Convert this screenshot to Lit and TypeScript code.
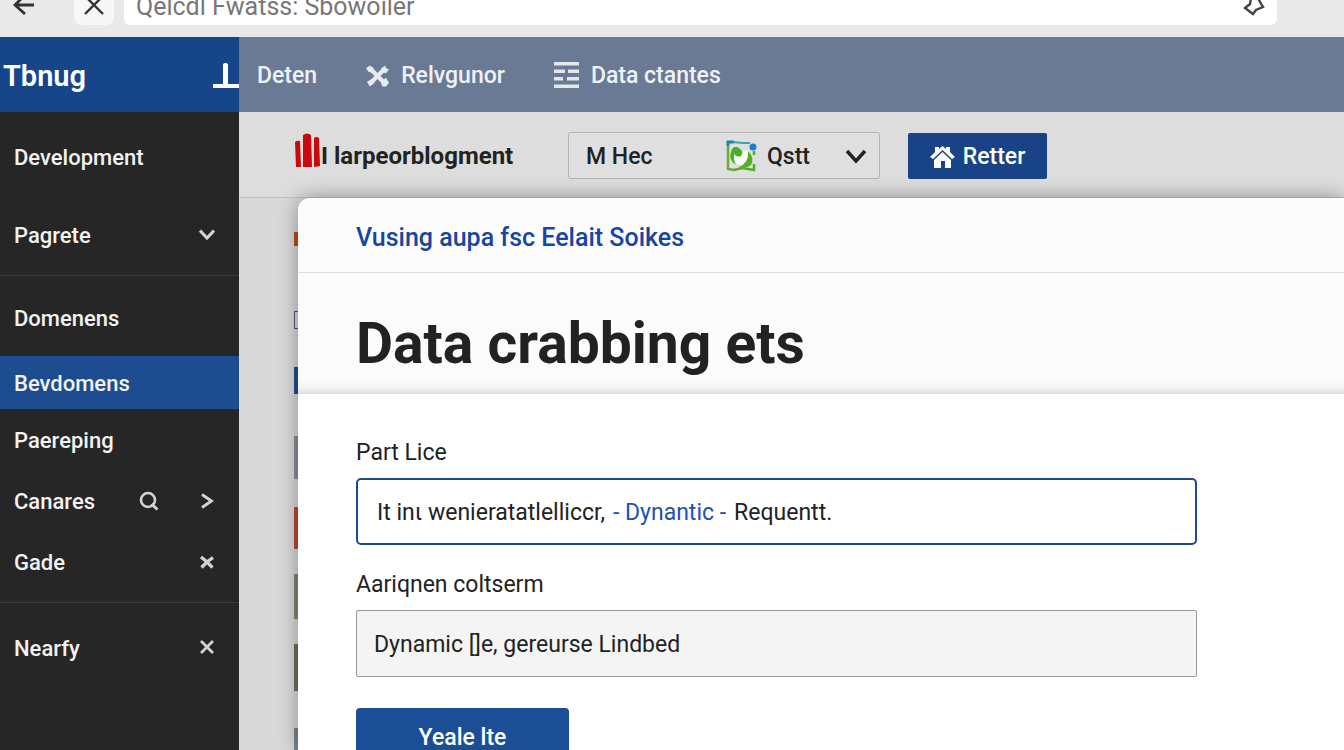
import { LitElement, html, css, svg, nothing } from "lit";
import { customElement } from "lit/decorators.js";
import { classMap } from "lit/directives/class-map.js";

interface NavItem {
  label: string;
  size: "tall" | "active" | "short";
  icon?: "down" | "right" | "close" | "closeBold";
  search?: boolean;
}

const GROUPS: { name: string; items: NavItem[] }[] = [
  {
    name: "first",
    items: [
      { label: "Development", size: "tall" },
      { label: "Pagrete", size: "tall", icon: "down" },
    ],
  },
  {
    name: "second",
    items: [
      { label: "Domenens", size: "tall" },
      { label: "Bevdomens", size: "active" },
      { label: "Paereping", size: "short" },
      { label: "Canares", size: "short", icon: "right", search: true },
      { label: "Gade", size: "short", icon: "closeBold" },
    ],
  },
  {
    name: "third",
    items: [{ label: "Nearfy", size: "tall", icon: "close" }],
  },
];

const GLYPHS = {
  down: svg`<path d="M1 4.500 8 12 15 4.500" fill="none" stroke="currentColor" stroke-width="3"/>`,
  right: svg`<path d="M3 1.500 12.500 8 3 14.500" fill="none" stroke="currentColor" stroke-width="2.800"/>`,
  close: svg`<path d="M2 2 14 14M14 2 2 14" fill="none" stroke="currentColor" stroke-width="2.700"/>`,
  closeBold: svg`<path d="M2 3 8 8 14 3.500M2.500 13.500 8 8 13.500 13.500" fill="none" stroke="currentColor" stroke-width="3.300"/>`,
};

@customElement("side-nav")
export class SideNav extends LitElement {
  static styles = css`
    :host {
      display: block;
      background: #262626;
      color: #f2f2f2;
    }
    .group {
      margin: 0;
      list-style: none;
      border-bottom: 1px solid #3d3d3d;
    }
    .first { padding: 5px 0 2px; }
    .second { padding: 2px 0 10px; }
    .third { padding: 5px 0; border-bottom: 0; }
    .item {
      display: flex;
      align-items: center;
      padding: 0 24px 0 14px;
      font-size: 22px;
      font-weight: 500;
      color: inherit;
      text-decoration: none;
    }
    .tall { height: 78px; }
    .active { height: 53px; background: #1d4d90; }
    .short { height: 61px; }
    .label { flex: 1; padding-top: 2px; }
    .glyph { width: 16px; height: 16px; color: #d4d4d4; }
    .search { width: 20px; height: 20px; margin-right: 40px; color: #d4d4d4; }
  `;

  render() {
    return html`<nav aria-label="Main">
      ${GROUPS.map(
        (group) => html`<ul class="group ${group.name}">
          ${group.items.map(
            (item) => html`<li>
              <a class=${classMap({ item: true, [item.size]: true })} href="#">
                <span class="label">${item.label}</span>
                ${item.search
                  ? html`<svg class="search" viewBox="0 0 20 20" aria-hidden="true">
                      <circle cx="9" cy="9" r="7" fill="none" stroke="currentColor" stroke-width="2.600" />
                      <path d="M12.500 13 18.500 18.500" stroke="currentColor" stroke-width="3" />
                    </svg>`
                  : nothing}
                ${item.icon
                  ? html`<svg class="glyph" viewBox="0 0 16 16" aria-hidden="true">${GLYPHS[item.icon]}</svg>`
                  : nothing}
              </a>
            </li>`
          )}
        </ul>`
      )}
    </nav>`;
  }
}

@customElement("app-root")
export class AppRoot extends LitElement {
  static styles = css`
    :host {
      display: flex;
      flex-direction: column;
      height: 100vh;
      overflow: hidden;
      font-family: Roboto, "Liberation Sans", sans-serif;
      font-size: 23px;
      color: #222;
      background: #d9d9d9;
    }
    * { box-sizing: border-box; }
    button, input, select { font: inherit; color: inherit; margin: 0; border: 0; background: none; }
    button { cursor: pointer; padding: 0; }
    svg { display: block; flex: none; }

    .browser {
      display: flex;
      align-items: flex-end;
      flex: none;
      height: 37px;
      padding: 0 67px 12px 4px;
      overflow: hidden;
      background: #e9e9e9;
    }
    .tool {
      display: flex;
      align-items: center;
      justify-content: center;
      width: 40px;
      height: 40px;
      border-radius: 8px;
      color: #333;
    }
    .stop { margin: 0 10px 0 30px; background: #f7f7f7; }
    .address {
      display: flex;
      align-items: center;
      flex: 1;
      height: 40px;
      padding: 2px 12px 0;
      background: #fff;
      border-radius: 6px;
    }
    .url { flex: 1; min-width: 0; padding: 0; font-size: 25px; color: #777; }

    .top { display: flex; flex: none; height: 75px; color: #eef2f8; }
    .brand {
      display: flex;
      align-items: center;
      justify-content: space-between;
      width: 239px;
      padding: 2px 0 0 3px;
      background: #16458a;
      color: #fff;
      font-size: 29px;
      font-weight: 600;
    }
    .tabs {
      display: flex;
      align-items: center;
      gap: 49px;
      flex: 1;
      padding: 2px 18px 0;
      background: #6a7a94;
    }
    .tab {
      display: flex;
      align-items: center;
      gap: 12px;
      color: inherit;
      font-weight: 500;
      text-decoration: none;
    }

    .body { display: flex; flex: 1; min-height: 0; }
    side-nav { flex: none; width: 239px; }
    .main { display: flex; flex-direction: column; flex: 1; min-width: 0; }
    .bar {
      display: flex;
      align-items: center;
      flex: none;
      height: 86px;
      padding: 2px 56px 0;
      border-bottom: 1px solid #c2c2c2;
      background: #dddddd;
    }
    .product {
      display: flex;
      align-items: center;
      width: 273px;
      font-size: 24px;
      font-weight: 700;
    }
    .mark { margin: 0 0 10px; }
    .filter {
      display: flex;
      align-items: center;
      width: 312px;
      height: 47px;
      padding: 0 12px 0 17px;
      border: 1px solid #b3b3b3;
      border-radius: 3px;
      background: #dfdfdf;
      font-weight: 500;
    }
    .term { width: 140px; padding: 2px 0 0; }
    .choice { position: relative; flex: 1; margin-left: 10px; }
    .pick { width: 100%; padding: 2px 0 0; appearance: none; outline: 0; }
    .caret { position: absolute; right: 0; top: 6px; pointer-events: none; }
    .action {
      display: flex;
      align-items: center;
      justify-content: center;
      gap: 8px;
      width: 139px;
      height: 46px;
      padding-top: 2px;
      margin-left: 28px;
      border-radius: 2px;
      background: #184487;
      color: #fff;
      font-weight: 500;
    }

    .stage { position: relative; flex: 1; min-height: 0; padding: 34px 0 0 55px; }
    .strips { display: flex; flex-direction: column; }
    .strip { width: 120px; }
    .s1 { height: 14px; background: #c24a20; }
    .s2 { height: 18px; margin-top: 65px; border: 1px solid #4d5d80; }
    .s3 { height: 27px; margin-top: 38px; background: #1f4f90; }
    .s4 { height: 43px; margin-top: 42px; background: #8a909a; }
    .s5 { height: 42px; margin-top: 28px; background: #c04a30; }
    .s6 { height: 45px; margin-top: 25px; background: #85876e; }
    .s7 { height: 47px; margin-top: 25px; background: #6f7058; }
    .s8 { height: 40px; margin-top: 37px; background: #7c8593; }

    .panel {
      position: absolute;
      inset: 0 0 0 59px;
      border-top-left-radius: 12px;
      background: #fff;
      box-shadow: 0 0 20px rgba(0, 0, 0, 0.38);
    }
    .crumb {
      display: flex;
      align-items: center;
      height: 75px;
      padding: 4px 58px 0;
      border-bottom: 1px solid #dadcdd;
      border-top-left-radius: 12px;
      background: #fcfcfc;
      font-size: 25px;
      font-weight: 500;
    }
    .link { color: #1745a3; text-decoration: none; }
    .title {
      display: flex;
      align-items: center;
      height: 121px;
      margin: 0;
      padding: 20px 58px 0;
      background: linear-gradient(#fbfbfb 88%, #f3f3f3 95%, #dcdcdc);
      font-size: 57px;
      font-weight: 700;
    }
    .form { max-width: 957px; padding: 44px 58px 0; }
    .caption { display: block; padding-top: 2px; line-height: 26px; }
    .box {
      display: flex;
      align-items: center;
      height: 67px;
      margin: 12px 0 25px;
      padding: 2px 19px 0;
      border: 2px solid #1f4792;
      border-radius: 5px;
    }
    .part { field-sizing: content; padding: 0; outline: 0; }
    .token { padding: 0 8px; color: #1d50b8; text-decoration: none; white-space: pre; }
    .plain {
      display: block;
      width: 100%;
      height: 67px;
      margin: 12px 0 31px;
      padding: 2px 17px 0;
      border: 1px solid #979797;
      border-radius: 2px;
      background: #f4f4f4;
    }
    .submit {
      width: 213px;
      height: 58px;
      border-radius: 4px;
      background: #1c4e96;
      color: #fff;
      font-weight: 500;
    }
  `;

  render() {
    return html`
      <div class="browser">
        <button class="tool" aria-label="Back">
          <svg width="24" height="24" viewBox="0 0 24 24" fill="none" stroke="currentColor" stroke-width="2.800">
            <path d="M22 12H3M12 3 3 12 13 21" />
          </svg>
        </button>
        <button class="tool stop" aria-label="Stop">
          <svg width="22" height="22" viewBox="0 0 22 22" fill="none" stroke="currentColor" stroke-width="2.400">
            <path d="M2 2 20 20M20 2 2 20" />
          </svg>
        </button>
        <div class="address">
          <input class="url" aria-label="Address" value="Qelcdl Fwatss: Sbowoiler" />
          <button aria-label="Bookmark">
            <svg width="22" height="22" viewBox="0 0 22 22" fill="none" stroke="#444" stroke-width="2.400">
              <path d="M8 3 7 9 2 13 10 19 13 15 20 12 17 7 15 3" />
            </svg>
          </button>
        </div>
      </div>

      <header class="top">
        <div class="brand">
          <span>Tbnug</span>
          <svg width="26" height="26" viewBox="0 0 26 26" fill="#fff" aria-hidden="true">
            <path d="M0 21H10V1Q12.500-1 15 1V21H26V25H0Z" />
          </svg>
        </div>
        <nav class="tabs" aria-label="Sections">
          <a class="tab" href="#">Deten</a>
          <a class="tab" href="#">
            <svg width="23" height="24" viewBox="0 0 24 24" aria-hidden="true">
              <path d="M4 4 20 20M19 5 4 20" stroke="#e6ebf2" stroke-width="4.500" />
              <path d="M0 4 4 1 8 4 7 8 3 8ZM16 4 20 1 21 4 24 5 21 9 17 8ZM1 18 6 15 9 19 4 23ZM15 17 21 14 24 19 21 23 17 23Z" fill="#e6ebf2" />
            </svg>
            Relvgunor
          </a>
          <a class="tab" href="#">
            <svg width="25" height="27" viewBox="0 0 25 27" fill="#e3e9e9" aria-hidden="true">
              <path d="M0 0H25V3.500H0ZM0 7.500H11V11H0ZM14 7.500H25V11H14ZM0 15H9V18.500H0ZM13 15H25V18.500H13ZM0 22.500H25V26H0Z" />
            </svg>
            Data ctantes
          </a>
        </nav>
      </header>

      <div class="body">
        <side-nav></side-nav>
        <main class="main">
          <div class="bar">
            <div class="product">
              <svg class="mark" width="26" height="35" viewBox="0 0 26 35" fill="#c9090d" aria-hidden="true">
                <path d="M0 9Q2 7 5 8L6 34H1ZM8 2Q12-1 16 2L17 34H8ZM19 5Q22 3 24 5L25 33 19 34Z" />
              </svg>
              <span>I larpeorblogment</span>
            </div>
            <div class="filter">
              <input class="term" aria-label="Filter" value="M Hec" />
              <svg width="31" height="32" viewBox="0 0 31 32" fill="none" aria-hidden="true">
                <path d="M2 6V2H8" stroke="#1688a5" stroke-width="3" />
                <path d="M7 2 17 3H24" stroke="#37a3b4" stroke-width="2" />
                <path d="M2 6V29L8 30" stroke="#69ad35" stroke-width="2.500" />
                <path d="M8 30 16 28 28 30V24M28 15V11" stroke="#58a830" stroke-width="2.500" />
                <path d="M5 12Q6 7 11 7Q17 10 15 15Q12 17 10 16Q7 20 10 25Q2 20 5 12Z" fill="#4cae23" />
                <path d="M9 12Q15 13 22 10 26 18 22 23 18 28 11 24 6 20 9 12Z" fill="#fafcf8" />
                <path d="M6 9Q9 5 14 9 18 12 15 16 10 18 8 13Z" fill="#4cae23" />
                <path d="M22 11Q29 18 25 25 21 29 13 27 23 23 22 11Z" fill="#55b028" />
                <circle cx="27" cy="7" r="3.500" fill="#1483ce" />
              </svg>
              <div class="choice">
                <select class="pick" aria-label="Scope">
                  <option>Qstt</option>
                </select>
                <svg class="caret" width="22" height="20" viewBox="0 0 22 20" aria-hidden="true">
                  <path d="M2 4 11 14 20 4" fill="none" stroke="#222" stroke-width="3.500" />
                </svg>
              </div>
            </div>
            <button class="action">
              <svg width="25" height="24" viewBox="0 0 25 24" fill="#fff" aria-hidden="true">
                <path d="M0 12 5 7V2H9V4L12.500 1 16 4V2H20V7L25 12 22 14 12.500 5 3 14ZM4 15 12.500 7 21 15V23H15V16H11V23H4Z" />
              </svg>
              Retter
            </button>
          </div>

          <div class="stage">
            <div class="strips" aria-hidden="true">
              ${[1, 2, 3, 4, 5, 6, 7, 8].map((n) => html`<div class="strip s${n}"></div>`)}
            </div>
            <section class="panel">
              <div class="crumb"><a class="link" href="#">Vusing aupa fsc Eelait Soikes</a></div>
              <h1 class="title">Data crabbing ets</h1>
              <form class="form">
                <label class="caption" for="port">Part Lice</label>
                <div class="box">
                  <input class="part" id="port" value="It inι wenieratatlelliccr," />
                  <a class="token" href="#">- Dynantic -</a>
                  <input class="part" aria-label="Part Lice suffix" value="Requentt." />
                </div>
                <label class="caption" for="assign">Aariqnen coltserm</label>
                <input class="plain" id="assign" value="Dynamic []e, gereurse Lindbed" />
                <button class="submit" type="button">Yeale lte</button>
              </form>
            </section>
          </div>
        </main>
      </div>
    `;
  }
}
